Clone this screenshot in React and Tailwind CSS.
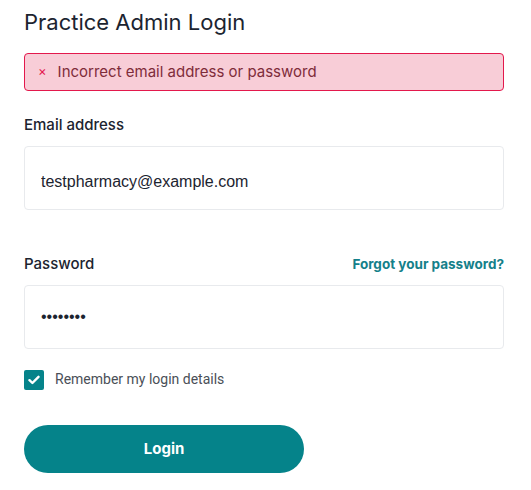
import React, { useState } from "react";

function App() {
  const [email, setEmail] = useState("testpharmacy@example.com");
  const [password, setPassword] = useState("password");
  const [remember, setRemember] = useState(true);

  return (
    <div className="min-h-screen bg-white px-6 pt-[7px] font-['Inter',sans-serif]">
      <div className="w-[480px]">
        <h1 className="text-[22px] leading-[30px] text-[#1c2430] font-normal">
          Practice Admin Login
        </h1>

        <div className="mt-[16px] flex h-[38px] items-center rounded border border-[#e3184c] bg-[#f8cdd7] px-3">
          <span className="ml-[1px] text-[13px] text-[#e3184c]">×</span>
          <span className="ml-[11px] text-[15px] text-[#7f2c3a]">
            Incorrect email address or password
          </span>
        </div>

        <form className="mt-[24px]" onSubmit={(e) => e.preventDefault()}>
          <label className="block text-[15px] leading-5 font-medium text-[#1c2430]">
            Email address
          </label>
          <input
            type="email"
            className="mt-[11px] block h-[64px] w-full rounded border border-[#e8eaed] px-4 pt-2 font-['Liberation_Sans',Arial,sans-serif] text-[16px] text-[#1c2430] outline-none"
            value={email}
            onChange={(e) => setEmail(e.target.value)}
          />

          <div className="mt-[44px] flex items-center justify-between">
            <label className="text-[15px] leading-5 font-medium text-[#1c2430]">
              Password
            </label>
            <a href="#" className="text-[13.5px] font-bold text-[#14808a]">
              Forgot your password?
            </a>
          </div>
          <input
            type="password"
            className="mt-[11px] block h-[64px] w-full rounded border border-[#e8eaed] px-4 font-['Liberation_Sans',Arial,sans-serif] text-[16px] text-[#1c2430] outline-none"
            value={password}
            onChange={(e) => setPassword(e.target.value)}
          />

          <label className="mt-[20px] flex items-center gap-[11px]">
            <button
              type="button"
              onClick={() => setRemember(!remember)}
              className="flex h-[20px] w-[20px] items-center justify-center rounded-[2px] bg-[#05838a]"
            >
              {remember && (
                <svg width="12" height="10" viewBox="0 0 12 10">
                  <path
                    d="M1.5 5.2 4.4 8 10.5 1.8"
                    fill="none"
                    stroke="white"
                    strokeWidth="2.4"
                    strokeLinecap="round"
                    strokeLinejoin="round"
                  />
                </svg>
              )}
            </button>
            <span className="font-['Roboto',sans-serif] text-[14px] text-[#4a4f57]">
              Remember my login details
            </span>
          </label>

          <button
            type="submit"
            className="mt-[35px] h-[48px] w-[280px] rounded-full bg-[#05838a] text-[15px] font-bold text-white"
          >
            Login
          </button>
        </form>
      </div>
    </div>
  );
}

export default App;
